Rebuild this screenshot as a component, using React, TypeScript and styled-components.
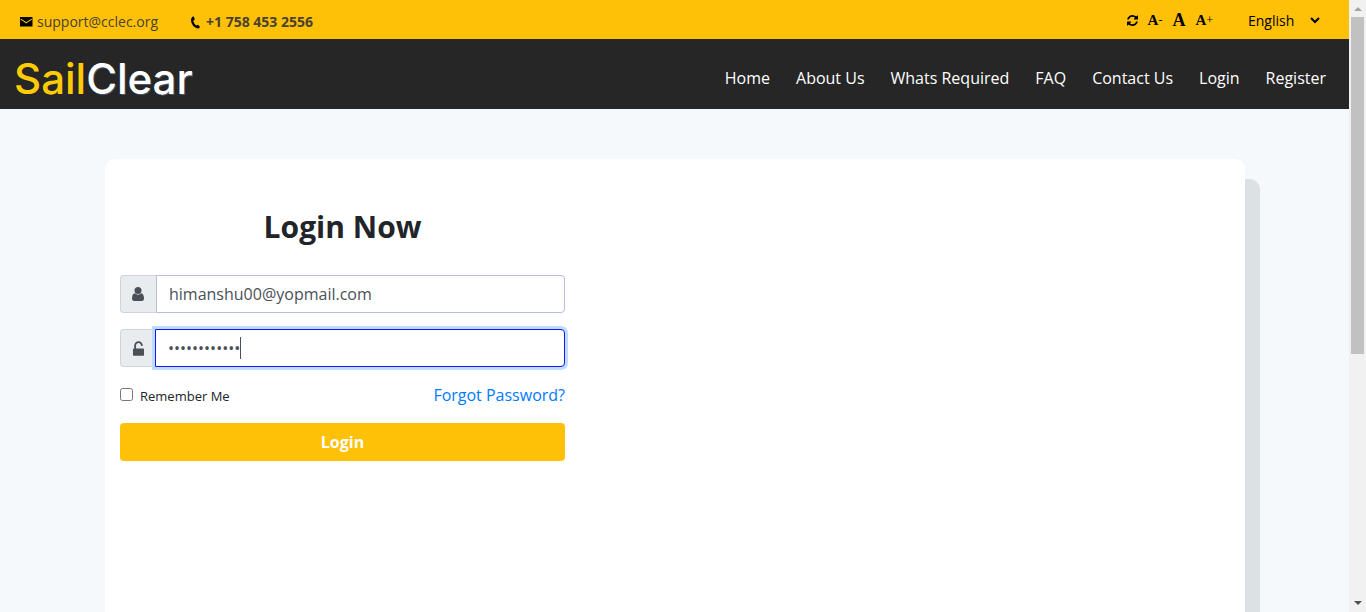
import React, { useState } from "react";
import styled, { createGlobalStyle, css } from "styled-components";

const GlobalStyle = createGlobalStyle`
  *, *::before, *::after { box-sizing: border-box; }
  html, body { margin: 0; }
  body {
    font-family: "Open Sans", "Liberation Sans", sans-serif;
    font-size: 16px;
    line-height: 24px;
    color: #212529;
    background: #f5f9fc;
  }
`;

const Viewport = styled.div`
  display: flex;
  height: 100vh;
  overflow: hidden;
`;

const Page = styled.div`
  flex: 1;
  min-width: 0;
  display: flex;
  flex-direction: column;
`;

const TopBar = styled.div`
  flex: none;
  display: flex;
  justify-content: space-between;
  align-items: center;
  padding: 8px 26px 7px 20px;
  background: #ffc107;
  font-size: 14px;
`;

const Contacts = styled.address`
  display: flex;
  gap: 32px;
  padding-top: 4px;
  font-style: normal;
  line-height: 20px;
`;

const ContactLink = styled.a<{ $strong?: boolean }>`
  display: flex;
  align-items: center;
  gap: 4px;
  color: #484030;
  font-weight: ${(p) => (p.$strong ? 700 : 400)};
  text-decoration: none;
  svg { color: #000; }
`;

const Tools = styled.div`
  display: flex;
  align-items: center;
  gap: 10px;
`;

const SizeButton = styled.button<{ $large?: boolean }>`
  display: flex;
  align-items: center;
  padding: 0;
  border: 0;
  background: none;
  color: #000;
  font: 700 ${(p) => (p.$large ? 18 : 15)}px/20px "Liberation Serif", serif;
  cursor: pointer;
`;

const Sign = styled.span`
  font-size: 12px;
  font-weight: 400;
  line-height: 16px;
`;

const LanguageSelect = styled.select`
  width: 79px;
  height: 24px;
  margin-left: 21px;
  padding: 0;
  border: 0;
  background: transparent;
  color: #000;
  font: 400 14px/20px "Open Sans", sans-serif;
`;

const Header = styled.header`
  flex: none;
  display: flex;
  justify-content: space-between;
  align-items: center;
  height: 70px;
  padding: 0 23px 0 14px;
  background: #262626;
`;

const Logo = styled.a`
  padding-top: 10px;
  color: #fff;
  font: 500 42px/48px Inter, sans-serif;
  text-decoration: none;
  text-shadow: 1px 1px 0 #46566b;
`;

const LogoAccent = styled.span`
  color: #ffcb05;
  text-shadow: none;
`;

const Nav = styled.nav`
  display: flex;
  gap: 26px;
  padding-top: 7px;
`;

const NavLink = styled.a`
  color: #fff;
  font-weight: 500;
  text-decoration: none;
`;

const Main = styled.main`
  flex: 1;
  min-height: 0;
  padding: 50px 104px 0 105px;
`;

const Card = styled.section`
  display: grid;
  grid-template-columns: minmax(0, 445px) 1fr;
  min-height: 800px;
  max-width: 1140px;
  margin: 0 auto;
  padding: 48px 15px;
  border-radius: 10px;
  background: #fff;
  box-shadow: 15px 20px 0 #dce1e4;
`;

const Form = styled.form`
  display: flex;
  flex-direction: column;
`;

const Title = styled.h1`
  margin: 0 0 28px;
  font-size: 30px;
  line-height: 40px;
  font-weight: 700;
  text-align: center;
`;

const Field = styled.div`
  position: relative;
  display: flex;
  height: 38px;
  margin-bottom: 16px;
`;

const FieldIcon = styled.label`
  flex: none;
  display: flex;
  align-items: center;
  justify-content: center;
  width: 36px;
  padding-right: 1px;
  border: 1px solid #ced4da;
  border-right: 0;
  border-radius: 4px 0 0 4px;
  background: #e9ecef;
  color: #495057;
`;

const focused = css`
  margin-left: -1px;
  border-color: #1414ff;
  box-shadow: 0 0 0 3px #bfdeff;
  caret-color: transparent;
`;

const TextInput = styled.input<{ $active?: boolean }>`
  flex: 1;
  min-width: 0;
  padding: 6px 12px;
  border: 1px solid #b9bbe0;
  border-radius: 0 4px 4px 0;
  outline: 0;
  background: #fff;
  color: #495057;
  font: 400 16px/24px "Open Sans", sans-serif;
  ${(p) => p.$active && focused}
`;

const Caret = styled.span`
  position: absolute;
  top: 8px;
  width: 1px;
  height: 22px;
  background: #495057;
  pointer-events: none;
`;

const Options = styled.div`
  display: flex;
  justify-content: space-between;
  align-items: center;
  margin-bottom: 16px;
`;

const Remember = styled.label`
  display: flex;
  align-items: center;
  gap: 7px;
  padding-top: 2px;
  font-size: 13px;
  line-height: 22px;
`;

const Checkbox = styled.input`
  width: 13px;
  height: 13px;
  margin: 0 0 4px;
`;

const ForgotLink = styled.a`
  color: #007bff;
  text-decoration: none;
`;

const SubmitButton = styled.button`
  height: 38px;
  border: 0;
  border-radius: 4px;
  background: #ffc107;
  color: #fff;
  font: 700 16px/24px "Open Sans", sans-serif;
  cursor: pointer;
`;

const ScrollTrack = styled.div`
  flex: none;
  display: flex;
  flex-direction: column;
  align-items: center;
  width: 17px;
  padding-right: 1px;
  background: #f1f1f1;
`;

const ScrollThumb = styled.div`
  width: 13px;
  height: 55%;
  margin-bottom: auto;
  background: #c1c1c1;
`;

const Arrow = ({ down }: { down?: boolean }) => (
  <svg width="17" height="17" viewBox="0 0 17 17" aria-hidden="true">
    <path d={down ? "M5 6h8l-4 4z" : "M5 11h8l-4-4z"} fill={down ? "#505050" : "#a3a3a3"} />
  </svg>
);

const MailIcon = () => (
  <svg width="13" height="10" viewBox="0 0 13 10" aria-hidden="true">
    <rect width="12.500" height="9.500" rx=".6" fill="currentColor" />
    <path d="M.8 2.200Q3.500 3.600 6.200 5.800 9 3.600 11.700 2.200" fill="none" stroke="#ffc107" strokeWidth="1.100" />
  </svg>
);

const PhoneIcon = () => (
  <svg width="12" height="13" viewBox="0 0 12 13" aria-hidden="true">
    <path d="M2.600.8Q.2 3 1.500 6.700 3.300 11.200 7.200 12.300L7.300 10.300Q4.300 9 3.300 5.200z" fill="currentColor" />
    <path d="M2.400.7 3.800.5 4.800 3.500 3 5 1.500 3zM6.400 9.600 8 8.800 10 11 8.800 12.500 6.800 12.300z" fill="currentColor" />
  </svg>
);

const RefreshIcon = () => (
  <svg width="11" height="11" viewBox="0 0 1536 1536" aria-hidden="true">
    <path fill="currentColor" d="M1511 928q0 5-1 7-64 268-268 434.500T764 1536q-146 0-282.500-55T238 1324l-129 129q-19 19-45 19t-45-19-19-45V960q0-26 19-45t45-19h448q26 0 45 19t19 45-19 45l-137 137q71 66 161 102t187 36q134 0 250-65t186-179q11-17 53-117 8-23 30-23h192q13 0 22.500 9.500t9.500 22.500zm25-800v448q0 26-19 45t-45 19h-448q-26 0-45-19t-19-45 19-45l138-138Q969 256 768 256q-134 0-250 65T332 500q-11 17-53 117-8 23-30 23H50q-13 0-22.500-9.500T18 608v-7q65-268 270-434.500T768 0q146 0 284 55.500T1297 212l130-129q19-19 45-19t45 19 19 45z" />
  </svg>
);

const UserIcon = () => (
  <svg width="12" height="14" viewBox="0 0 12 14" aria-hidden="true">
    <circle cx="6" cy="3.500" r="3.500" fill="currentColor" />
    <path d="M2.700 6.300Q6 9.200 9.300 6.300 12 7 12 11.500 12 14 9.500 14h-7Q0 14 0 11.500 0 7 2.700 6.300z" fill="currentColor" />
  </svg>
);

const UnlockIcon = () => (
  <svg width="11" height="15" viewBox="320 0 1152 1536" aria-hidden="true">
    <path fill="currentColor" d="M1376 768q40 0 68 28t28 68v576q0 40-28 68t-68 28H416q-40 0-68-28t-28-68V864q0-40 28-68t68-28h32V448q0-185 131.500-316.500T896 0t316.500 131.500T1344 448q0 26-19 45t-45 19h-64q-26 0-45-19t-19-45q0-106-75-181t-181-75-181 75-75 181v320h736z" />
  </svg>
);

const navItems = ["Home", "About Us", "Whats Required", "FAQ", "Contact Us", "Login", "Register"];

const BULLET_WIDTH = 6;
const TEXT_START = 48;

export default function App() {
  const [email, setEmail] = useState("himanshu00@yopmail.com");
  const [password, setPassword] = useState("password1234");

  return (
    <>
      <GlobalStyle />
      <Viewport>
        <Page>
          <TopBar>
            <Contacts>
              <ContactLink href="mailto:support@cclec.org"><MailIcon />support@cclec.org</ContactLink>
              <ContactLink $strong href="tel:+17584532556"><PhoneIcon />+1 758 453 2556</ContactLink>
            </Contacts>
            <Tools>
              <SizeButton aria-label="Reset"><RefreshIcon /></SizeButton>
              <SizeButton>A<Sign>-</Sign></SizeButton>
              <SizeButton $large>A</SizeButton>
              <SizeButton>A<Sign>+</Sign></SizeButton>
              <LanguageSelect aria-label="Language"><option>English</option></LanguageSelect>
            </Tools>
          </TopBar>
          <Header>
            <Logo href="#"><LogoAccent>Sail</LogoAccent>Clear</Logo>
            <Nav>{navItems.map((item) => <NavLink key={item} href="#">{item}</NavLink>)}</Nav>
          </Header>
          <Main>
            <Card>
              <Form onSubmit={(e) => e.preventDefault()}>
                <Title>Login Now</Title>
                <Field>
                  <FieldIcon htmlFor="email" aria-label="Email"><UserIcon /></FieldIcon>
                  <TextInput id="email" type="email" value={email} onChange={(e) => setEmail(e.target.value)} />
                </Field>
                <Field>
                  <FieldIcon htmlFor="password" aria-label="Password"><UnlockIcon /></FieldIcon>
                  <TextInput id="password" type="password" $active autoFocus value={password} onChange={(e) => setPassword(e.target.value)} />
                  <Caret style={{ left: TEXT_START + BULLET_WIDTH * password.length }} />
                </Field>
                <Options>
                  <Remember htmlFor="remember"><Checkbox id="remember" type="checkbox" />Remember Me</Remember>
                  <ForgotLink href="#">Forgot Password?</ForgotLink>
                </Options>
                <SubmitButton type="submit">Login</SubmitButton>
              </Form>
            </Card>
          </Main>
        </Page>
        <ScrollTrack aria-hidden="true"><Arrow /><ScrollThumb /><Arrow down /></ScrollTrack>
      </Viewport>
    </>
  );
}
